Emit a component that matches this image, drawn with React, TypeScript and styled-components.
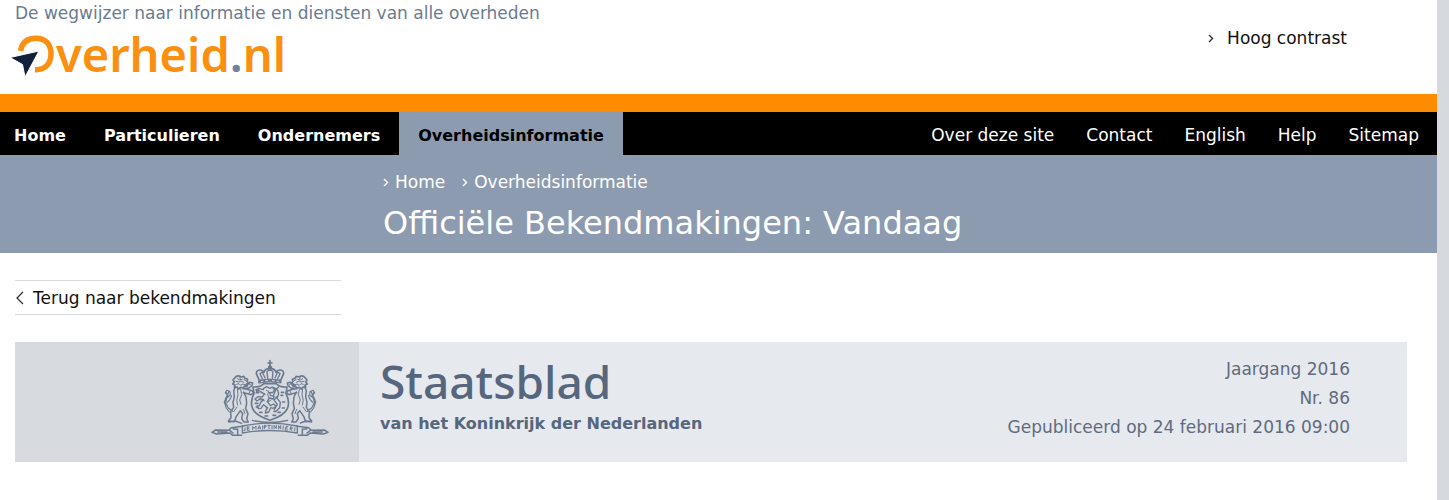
import React from 'react';
import styled, { createGlobalStyle } from 'styled-components';

const GlobalStyle = createGlobalStyle`
  *, *::before, *::after { box-sizing: border-box; }
  body {
    margin: 0;
    background: #d6dadf;
    color: #111;
    font-family: Verdana, 'DejaVu Sans', sans-serif;
    font-size: 17px;
    line-height: 22px;
  }
  a { color: inherit; text-decoration: none; }
  ul, ol, p, h1, h2 { margin: 0; padding: 0; list-style: none; }
`;

const Page = styled.div`
  min-height: 100vh;
  margin-right: 12px;
  background: #fff;
`;

const Header = styled.header`
  display: flex;
  justify-content: space-between;
  height: 112px;
  padding: 2px 90px 0 10px;
  border-bottom: 18px solid #ff8b00;
`;

const Tagline = styled.p`
  padding-left: 5px;
  color: #6a7b90;
`;

const Logo = styled.a`
  display: flex;
  align-items: flex-start;
  height: 56px;
  color: #fb8f0f;
  font-family: 'Noto Sans', sans-serif;
  font-size: 47px;
  font-weight: 600;
  line-height: 60px;
`;

const LogoMark = styled.svg`
  flex: none;
  width: 46px;
  height: 46px;
  margin-top: 8px;
`;

const LogoDot = styled.span`
  color: #74819b;
`;

const ContrastLink = styled.a`
  display: flex;
  align-items: center;
  align-self: flex-start;
  gap: 13px;
  padding-top: 25px;
`;

const NavBar = styled.nav`
  display: flex;
  justify-content: space-between;
  background: #000;
  color: #fff;
`;

const NavList = styled.ul`
  display: flex;
`;

const SectionList = styled(NavList)`
  margin-left: -5px;
  font-size: 16px;
  font-weight: 700;
`;

const ServiceList = styled(NavList)`
  margin-right: 2px;
`;

const NavLink = styled.a`
  display: block;
  padding: 4px 16px 0;
  line-height: 39px;
`;

const SectionLink = styled(NavLink)<{ $active: boolean }>`
  padding: 4px 19px 0;
  background: ${(p) => (p.$active ? '#8c9bb0' : 'transparent')};
  color: ${(p) => (p.$active ? '#000' : '#fff')};
`;

const TitleBand = styled.div`
  height: 98px;
  padding: 16px 20px 0 383px;
  background: #8c9bb0;
  color: #fff;
`;

const Crumbs = styled.ol`
  display: flex;
  gap: 17px;
`;

const CrumbLink = styled.a`
  display: flex;
  align-items: center;
  gap: 6px;
`;

const Title = styled.h1`
  padding-top: 9px;
  font-size: 32px;
  font-weight: 400;
  line-height: 42px;
`;

const Content = styled.main`
  padding: 27px 30px 38px 15px;
`;

const BackLink = styled.a`
  display: flex;
  align-items: center;
  gap: 8px;
  width: 326px;
  height: 35px;
  margin-bottom: 27px;
  border: solid #d6dadf;
  border-width: 1px 0;
`;

const Masthead = styled.section`
  display: flex;
  min-height: 120px;
  background: #e6e9ee;
  color: #5f6b7f;
`;

const Emblem = styled.div`
  display: flex;
  flex: none;
  justify-content: flex-end;
  width: 344px;
  padding: 16px 29px 0 0;
  background: #d7dbe0;
`;

const Arms = styled.svg`
  width: 120px;
  height: 80px;
`;

const Publication = styled.div`
  flex: 1;
  padding: 8px 0 0 21px;
  color: #56667d;
`;

const PublicationName = styled.h2`
  font-family: 'Noto Sans', sans-serif;
  font-size: 46px;
  font-weight: 500;
  line-height: 62px;
`;

const PublicationSub = styled.p`
  font-size: 16px;
  font-weight: 700;
  line-height: 24px;
`;

const Details = styled.ul`
  padding: 13px 57px 0 0;
  line-height: 29px;
  text-align: right;
`;

const Chevron = ({ color }: { color: string }) => (
  <svg width="6" height="9" viewBox="0 0 6 9" fill="none" stroke={color} strokeWidth="1.4" aria-hidden="true">
    <path d="M1 1l3.500 3.500L1 8" />
  </svg>
);

const BackArrow = () => (
  <svg width="10" height="14" viewBox="0 0 10 14" fill="none" stroke="#333" strokeWidth="1.3" aria-hidden="true">
    <path d="M8 1L2 7l6 6" />
  </svg>
);

const Lion = () => (
  <g>
    {/* mane and head */}
    <path d="M104 84q6-8 14-6l6 3 7-2 4 6 8 3-2 6 5 5-7 4 2 7-8-1-3 6-8-3-6 5-5-6-8 1 2-7-7-3 5-6-4-6z" strokeWidth="5" />
    <path d="M112 86l7 4 8-2M108 94l9 2 6-3 8 4M110 103l7-2 5 5 7-4M132 89l6 3M119 80l2 8" />
    {/* raised front paws */}
    <path d="M132 104l10 2 8-9 8 2-2 8-9 7-9 3M130 116l12 2 14 4 5 7-8 5-10-3-13-3" strokeWidth="4.5" />
    <path d="M147 101l5 4M150 123l-3 7" />
    {/* body and hind legs */}
    <path d="M106 110l-5 12 2 18-4 17 2 15-9 13 1 18-8 10 18 2 6-16 12-17 7 9-3 15 7 10h13l-5-9 4-16-7-15 3-17-2-18-7-15" strokeWidth="4.5" />
    <path d="M112 117l2 17-4 17 3 14M122 117l3 17-6 16 4 13M111 171l-10 14M130 178l5 13" />
    {/* tail */}
    <path d="M98 184l-13-10-8-16 3-14 11-9-1-10-10-4-4 8 8 5-6 9-5 13 6 18 9 12M78 125l3 10M88 123l-5 9M82 157l8-9 5-11" strokeWidth="3.5" />
  </g>
);

const CoatOfArms = () => (
  <Arms viewBox="30 24 360 240" fill="none" stroke="#6b798e" strokeWidth="3" strokeLinejoin="round" strokeLinecap="round" role="img" aria-label="Wapen van het Koninkrijk der Nederlanden">
    {/* crown */}
    <path d="M210 32v16M204 39h12" strokeWidth="5" />
    <circle cx="210" cy="52" r="5" fill="#6b798e" />
    <path d="M178 91l-9-20q0-10 10-11 9-1 13 7 2-11 18-11t18 11q4-8 13-7 10 1 10 11l-9 20z" strokeWidth="5" />
    <path d="M187 86l-7-15 7-5 8 18M203 85l-2-20 9-7 9 7-2 20M233 86l7-15-7-5-8 18" strokeWidth="4" />
    <path d="M177 92q33-9 66 0v7q-33-8-66 0z" fill="#6b798e" />
    <path d="M184 94h5M197 92h6M217 92h6M231 94h5" stroke="#d7dbe0" />
    {/* shield with its lion, billets and sword */}
    <path d="M159 111q23 1 32-10h38q9 11 32 10l-3 20q13 24 4 45-8 20-52 35-44-15-52-35-9-21 4-45z" strokeWidth="5" />
    <path d="M191 115l9-5 10 5 7-4 7 9-6 8-9-1 2 9 11 3-2 8-12-3-6 11 9 12 10-5 7 7-8 6-8-2-6 13-10 3 2-9 5-7-12-9-8 11-8 1-4-8 7-1 4-10 9-8-10-3-10 7-6-6 9-7 12 1 7-8-10-8-12 2-3-8 9-3 13 3z" strokeWidth="4" />
    <path d="M199 121l7 3-3 10 4 10-6 12M184 128l12 4M180 149l13 3M195 169l8 7M213 150l-8 5" />
    <path d="M220 137l8-19 8-7M222 113l11 7 3 12-5 13 10 12-2 16-9 9M231 139l-9 11 10 13-9 15" strokeWidth="4" />
    <path d="M170 121h7M169 128h6M166 160h7M169 171h6M179 187h7M195 198h8M219 196h8M234 187h7M247 174h6M248 156h6M244 127h7M243 136h5M222 184h6" strokeWidth="5" />
    {/* supporters */}
    <Lion />
    <g transform="matrix(-1 0 0 1 420 0)"><Lion /></g>
    {/* ribbon with the motto */}
    <path d="M127 228q82-17 165 0v21q-82-15-165 0z" strokeWidth="4" />
    <path d="M128 229l-34 4-8 8-39-1-11 7 14 5 40-3 8 7h27M292 229l34 4 8 8 39-1 11 7-14 5-40-3-8 7h-27M89 241l10 8M331 241l-10 8M53 246h28M339 246h28M100 237l13 1v14M320 237l-13 1v14" strokeWidth="4.5" />
    <path d="M135 233v9l-4-1M142 231v10h6M142 231h6M142 236h5M158 239v-10l5 6 5-7v10M174 237l4-10 4 10M175 234h6M188 227v10M193 236v-10h5v5h-5M203 226h8M207 226v10M216 226v10M222 236v-10l7 10v-10M236 237v-10l6 10v-10M249 238l1-10M256 239l2-10h6M257 234h5M263 240h-6M270 240l2-10 5 2v4h-6l5 6M284 243l1-10" />
    <path d="M86 216l20-3 19 7M301 219l17-6 17 3M157 211q52 13 106 0" strokeWidth="4" />
  </Arms>
);

const sections = ['Home', 'Particulieren', 'Ondernemers', 'Overheidsinformatie'];
const services = ['Over deze site', 'Contact', 'English', 'Help', 'Sitemap'];
const crumbs = ['Home', 'Overheidsinformatie'];
const details = ['Jaargang 2016', 'Nr. 86', 'Gepubliceerd op 24 februari 2016 09:00'];

export default function App() {
  return (
    <>
      <GlobalStyle />
      <Page>
        <Header>
          <div>
            <Tagline>De wegwijzer naar informatie en diensten van alle overheden</Tagline>
            <Logo href="#" aria-label="Overheid.nl">
              <LogoMark viewBox="0 0 46 46" aria-hidden="true">
                <path d="M10.500 19C12 10 18 6.200 26 6.200C36 6.200 41 13 41 21.500C41 32 35 38 25 37.700" fill="none" stroke="#fb8f0f" strokeWidth="5.500" />
                <path d="M0 25.500L29 19L15 45L12.500 32.500Z" fill="#13203a" stroke="#fff" strokeWidth="1" />
              </LogoMark>
              <span>verheid<LogoDot>.</LogoDot>nl</span>
            </Logo>
          </div>
          <ContrastLink href="#">
            <Chevron color="#333" />
            Hoog contrast
          </ContrastLink>
        </Header>
        <NavBar>
          <SectionList>
            {sections.map((label) => (
              <li key={label}>
                <SectionLink href="#" $active={label === 'Overheidsinformatie'}>{label}</SectionLink>
              </li>
            ))}
          </SectionList>
          <ServiceList>
            {services.map((label) => (
              <li key={label}><NavLink href="#">{label}</NavLink></li>
            ))}
          </ServiceList>
        </NavBar>
        <TitleBand>
          <Crumbs>
            {crumbs.map((label) => (
              <li key={label}>
                <CrumbLink href="#"><Chevron color="#fff" />{label}</CrumbLink>
              </li>
            ))}
          </Crumbs>
          <Title>Officiële Bekendmakingen: Vandaag</Title>
        </TitleBand>
        <Content>
          <BackLink href="#"><BackArrow />Terug naar bekendmakingen</BackLink>
          <Masthead>
            <Emblem><CoatOfArms /></Emblem>
            <Publication>
              <PublicationName>Staatsblad</PublicationName>
              <PublicationSub>van het Koninkrijk der Nederlanden</PublicationSub>
            </Publication>
            <Details>
              {details.map((line) => <li key={line}>{line}</li>)}
            </Details>
          </Masthead>
        </Content>
      </Page>
    </>
  );
}
